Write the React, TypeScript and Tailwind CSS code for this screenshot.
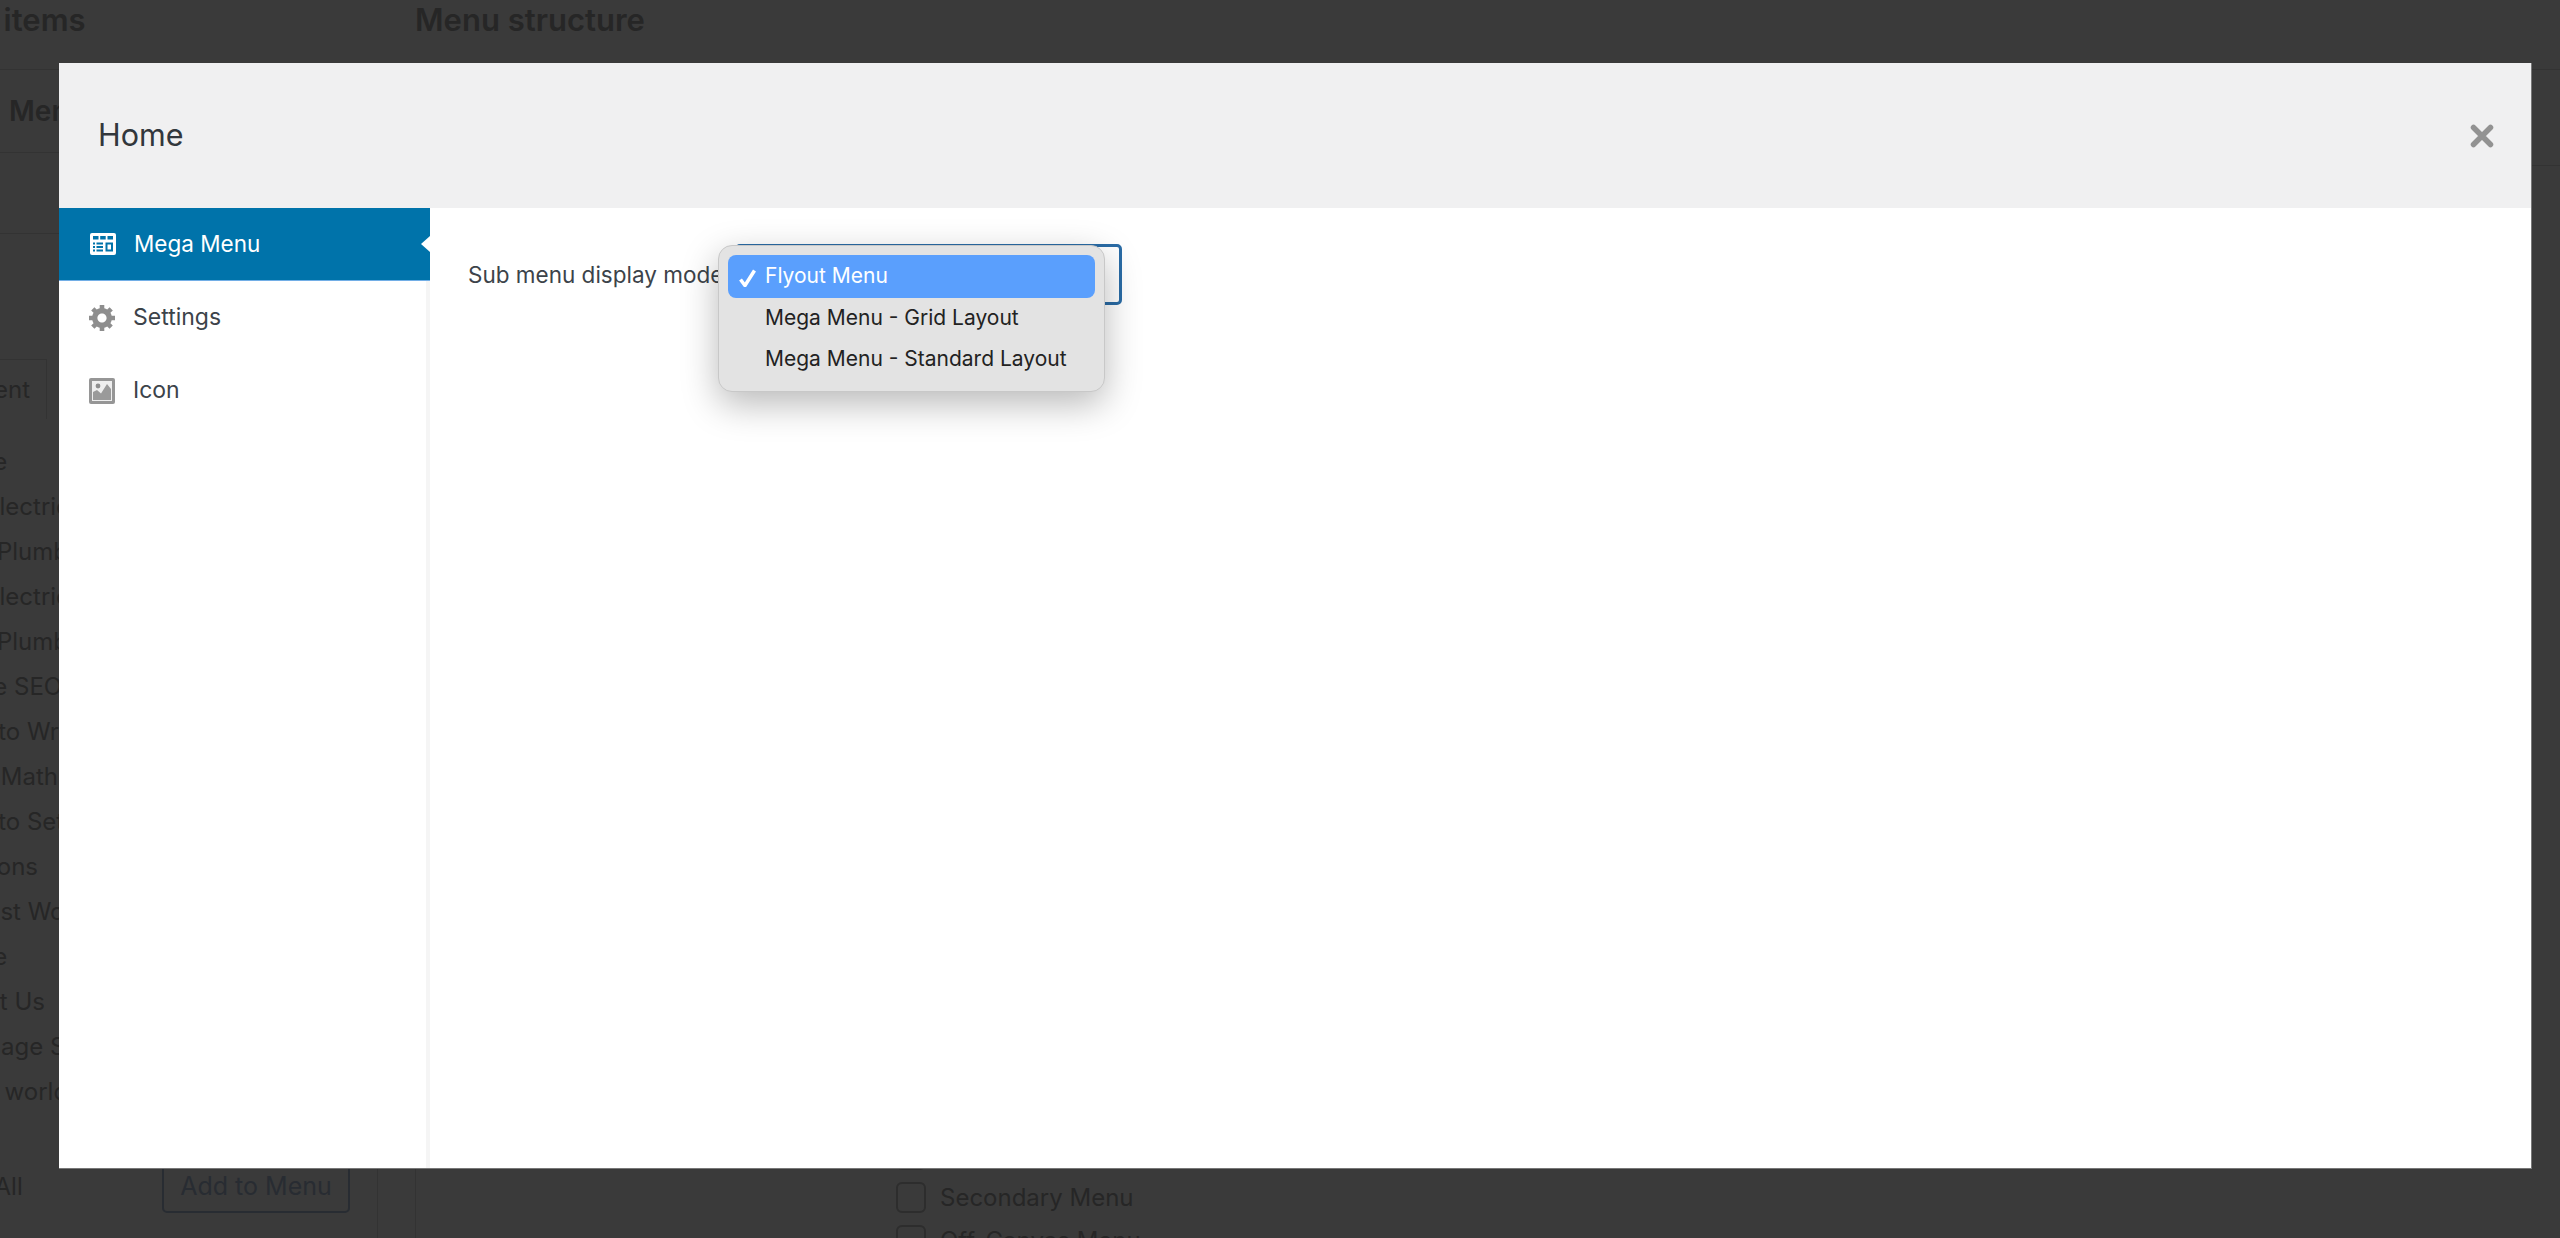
const font = { fontFamily: '"Inter", "Liberation Sans", sans-serif' };

const rows = [
  "Home",
  "Pro Electrical",
  "Best Plumbing",
  "Pro Electrical",
  "Best Plumbing",
  "Home SEO Guide",
  "How to Write",
  "Easy Math",
  "How to Set",
  "Sections",
  "Honest Work",
  "Home",
  "About Us",
  "Message Sent",
  "Hello world",
];

function MegaIcon() {
  return (
    <svg viewBox="0 0 26 22" className="w-[26px] h-[22px] shrink-0">
      <rect x="0" y="0" width="26" height="22" rx="2" fill="#fff" />
      <rect x="3" y="3" width="5.5" height="3.5" fill="#0073aa" />
      <rect x="10.2" y="3" width="5.5" height="3.5" fill="#0073aa" />
      <rect x="17.5" y="3" width="5.5" height="3.5" fill="#0073aa" />
      <rect x="3" y="9.5" width="2" height="2" fill="#0073aa" />
      <rect x="6.5" y="9.5" width="6.5" height="2" fill="#0073aa" />
      <rect x="3" y="13" width="2" height="2" fill="#0073aa" />
      <rect x="6.5" y="13" width="6.5" height="2" fill="#0073aa" />
      <rect x="3" y="16.5" width="2" height="2" fill="#0073aa" />
      <rect x="6.5" y="16.5" width="6.5" height="2" fill="#0073aa" />
      <path d="M15.5 9.5h7.5v9h-7.5z M17.5 11.5v5h3.5v-5z" fill="#0073aa" fillRule="evenodd" />
    </svg>
  );
}

function GearIcon() {
  return (
    <svg viewBox="1 2 17 17" className="w-[26px] h-[26px] shrink-0 -ml-[1px]" fill="#8e8e8e">
      <path d="M18 12h-2.18c-.17.7-.44 1.35-.81 1.93l1.54 1.54-2.1 2.1-1.54-1.54c-.58.36-1.23.63-1.91.79V19H8v-2.18c-.68-.16-1.33-.43-1.91-.79l-1.54 1.54-2.12-2.12 1.54-1.54c-.36-.58-.63-1.23-.79-1.91H1V9.03h2.17c.16-.7.44-1.35.8-1.94L2.43 5.55l2.1-2.1 1.54 1.54c.58-.37 1.24-.64 1.93-.81V2h3v2.18c.68.16 1.33.43 1.91.79l1.54-1.54 2.12 2.12-1.54 1.54c.36.59.64 1.24.8 1.94H18V12zm-8.5 1.5c1.66 0 3-1.34 3-3s-1.34-3-3-3-3 1.34-3 3 1.34 3 3 3z" />
    </svg>
  );
}

function ImageIcon() {
  return (
    <svg viewBox="0 0 26 26" className="w-[26px] h-[26px] shrink-0 -ml-[1px]">
      <rect x="0" y="0" width="26" height="26" rx="2" fill="#969696" />
      <rect x="3" y="3" width="20" height="20" fill="#eeeeee" />
      <circle cx="9" cy="8" r="2.4" fill="#8e8e8e" />
      <path d="M4 22 L4 14 L8 12 L12 15.5 L18 6 L22 11 L22 22 Z" fill="#9a9a9a" />
    </svg>
  );
}

export default function App() {
  return (
    <div className="relative h-[1238px] w-full overflow-hidden bg-[#3a3a3a] text-[#262626]" style={font}>
      <div className="flex h-full">
        <div className="-ml-[60px] flex w-[438px] shrink-0 flex-col">
          <div className="flex h-[69px] items-start">
            <h2 className="-ml-[97px] text-[31px] leading-[40px] font-semibold whitespace-nowrap text-[#262626]">
              Add menu items
            </h2>
          </div>
          <div className="flex flex-1 flex-col border-t border-r border-[#333333]">
            <div className="flex h-[83px] shrink-0 items-center border-b border-[#333333] pl-[69px] text-[28px] font-semibold whitespace-nowrap">
              Menu Items
            </div>
            <div className="h-[81px] shrink-0 border-b border-[#333333]" />
            <div className="h-[125px] shrink-0" />
            <div className="flex h-[60px] w-[107px] shrink-0 items-center justify-end border-t border-r border-[#333333] pr-[16px] text-[24px] whitespace-nowrap">
              Most Recent
            </div>
            <div className="h-[20px] shrink-0" />
            <div className="flex shrink-0 flex-col text-[24px] leading-[45px]">
              {rows.map((r, i) => (
                <div key={i} className="h-[45px] whitespace-nowrap">
                  {r}
                </div>
              ))}
            </div>
            <div className="mt-[47px] flex items-center justify-between pr-[27px]">
              <span className="-ml-[23px] text-[24px] whitespace-nowrap">Select All</span>
              <span className="flex h-[52px] w-[188px] items-center justify-center rounded-[5px] border-2 border-[#282c32] text-[25px] text-[#282c32]">
                Add to Menu
              </span>
            </div>
          </div>
        </div>
        <div className="ml-[37px] flex flex-1 flex-col">
          <div className="h-[69px]">
            <h2 className="text-[31px] leading-[40px] font-semibold whitespace-nowrap">Menu structure</h2>
          </div>
          <div className="flex flex-1 flex-col border-t border-l border-[#333333]">
            <div className="h-[96px] border-b border-[#333333]" />
            <div className="flex-1" />
            <div className="-mb-[18px] flex flex-col gap-[12px] pl-[480px] text-[24px]">
              {["Primary Menu", "Secondary Menu", "Off-Canvas Menu"].map((m) => (
                <div key={m} className="flex h-[31px] items-center gap-[14px]">
                  <span className="h-[31px] w-[30px] rounded-[6px] border-2 border-[#2d2d2d]" />
                  <span>{m}</span>
                </div>
              ))}
            </div>
          </div>
        </div>
      </div>

      <div className="absolute top-[63px] left-[59px] flex h-[1106px] w-[2473px] flex-col border-r border-b border-[#777777] bg-white">
        <div className="flex h-[145px] shrink-0 items-center justify-between bg-[#f0f0f1] pr-[37px] pl-[39px]">
          <h1 className="text-[30.5px] leading-none font-normal text-[#32373c]">Home</h1>
          <svg viewBox="0 0 24 24" className="h-[24px] w-[24px]" stroke="#929292" strokeWidth="5.5" strokeLinecap="round">
            <path d="M3.5 3.5L20.5 20.5M20.5 3.5L3.5 20.5" />
          </svg>
        </div>
        <div className="flex flex-1">
          <div className="w-[371px] shrink-0 border-r-4 border-[#f5f5f5] text-[23px] text-[#3c434a]">
            <div className="relative -mr-[4px] flex h-[73px] items-center gap-[18px] border-b border-[#72aee6] bg-[#0073aa] pl-[31px] text-white">
              <MegaIcon />
              <span className="text-[22.5px]">Mega Menu</span>
              <span className="absolute top-[28px] right-0 h-0 w-0 border-y-[8px] border-r-[9px] border-y-transparent border-r-white" />
            </div>
            <div className="flex h-[73px] items-center gap-[18px] pl-[31px]">
              <GearIcon />
              <span>Settings</span>
            </div>
            <div className="flex h-[73px] items-center gap-[18px] pl-[31px]">
              <ImageIcon />
              <span>Icon</span>
            </div>
          </div>
          <div className="flex-1 pt-[36px] pl-[38px]">
            <div className="flex items-center">
              <div className="w-[267px] shrink-0 pt-[1px]">
                <label className="text-[22.5px] whitespace-nowrap text-[#3c434a]">Sub menu display mode</label>
              </div>
              <div className="relative h-[61px] w-[387px] rounded-[5px] border-[3px] border-[#2a6ca6]">
                <div className="absolute -top-[2px] -left-[20px] flex h-[147px] w-[387px] flex-col rounded-[14px] border border-[#c8c8c8] bg-[#e3e3e3] px-[9px] pt-[9px] text-[21px] text-[#222222] shadow-[0_12px_36px_rgba(0,0,0,0.28)]">
                  <div className="flex h-[43px] shrink-0 items-center rounded-[8px] bg-[#5a9ffd] pb-[2px] text-white">
                    <svg viewBox="0 0 18 18" className="mt-[4px] mr-[8px] ml-[11px] h-[18px] w-[18px] shrink-0" fill="none" stroke="#fff" strokeWidth="3.5">
                      <path d="M1.5 10.5L6 16.5L15.5 1.5" />
                    </svg>
                    <span>Flyout Menu</span>
                  </div>
                  <div className="flex h-[41px] shrink-0 items-center pb-[2px] pl-[37px]">Mega Menu - Grid Layout</div>
                  <div className="flex h-[41px] shrink-0 items-center pb-[2px] pl-[37px]">Mega Menu - Standard Layout</div>
                </div>
              </div>
            </div>
          </div>
        </div>
      </div>
    </div>
  );
}
